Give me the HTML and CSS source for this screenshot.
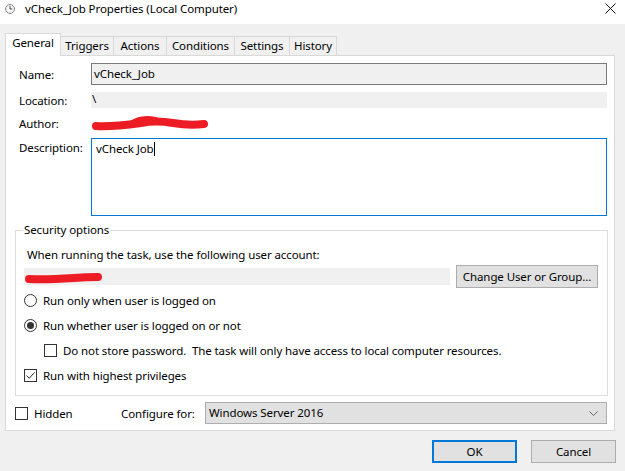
FILE: index.html
```html
<!DOCTYPE html>
<html lang="en">
<head>
	<meta charset="UTF-8">
	<title>vCheck_Job Properties</title>
	<link rel="stylesheet" href="styles.css">
</head>
<body>
	<div class="titlebar">
		<svg class="appIcon" viewBox="0 0 10 10">
			<circle cx="5" cy="5" r="4.5" fill="#fff" stroke="#8a8a8a" stroke-width="1"/>
			<circle cx="5" cy="5" r="3.6" fill="#fbfbfb" stroke="#c8c8c8" stroke-width="0.6"/>
			<path d="M5 2.2 V5 H7.2" fill="none" stroke="#333" stroke-width="0.9"/>
		</svg>
		<span class="title">vCheck_Job Properties (Local Computer)</span>
		<svg class="closeIcon" viewBox="0 0 11 11">
			<path d="M0.5 0.5 L10.5 10.5 M10.5 0.5 L0.5 10.5" stroke="#111" stroke-width="1"/>
		</svg>
	</div>

	<div class="tabs">
		<div class="tab active tabGeneral">General</div>
		<div class="tab tabTriggers">Triggers</div>
		<div class="tab tabActions">Actions</div>
		<div class="tab tabConditions">Conditions</div>
		<div class="tab tabSettings">Settings</div>
		<div class="tab tabHistory">History</div>
	</div>

	<div class="panel">
		<div class="fields">
			<div class="label">Name:</div>
			<div class="textBox">vCheck_Job</div>
			<div class="label">Location:</div>
			<div class="readOnly">\</div>
			<div class="label">Author:</div>
			<div class="author">
				<svg class="scribble" viewBox="0 0 118 16">
					<path d="M5 11 C 20 12, 35 10, 50 8 C 60 6, 70 6, 82 8 C 94 10, 104 10, 113 9" fill="none" stroke="#ed1c24" stroke-width="8" stroke-linecap="round"/>
					<path d="M40 9 C 46 4, 56 3, 64 5" fill="none" stroke="#ed1c24" stroke-width="6" stroke-linecap="round"/>
				</svg>
			</div>
			<div class="label labelTop">Description:</div>
			<div class="textArea">vCheck Job<span class="caret"></span></div>
		</div>

		<fieldset class="security">
			<legend>Security options</legend>
			<div class="hint">When running the task, use the following user account:</div>
			<div class="accountRow">
				<div class="account">
					<svg class="scribble" viewBox="0 0 80 17">
						<path d="M5 11 C 18 12, 35 11, 50 10 C 62 9, 70 9, 74 9" fill="none" stroke="#ed1c24" stroke-width="8" stroke-linecap="round"/>
					</svg>
				</div>
				<div class="btn changeBtn">Change User or Group...</div>
			</div>
			<div class="option"><span class="radio"></span>Run only when user is logged on</div>
			<div class="option"><span class="radio on"></span>Run whether user is logged on or not</div>
			<div class="option sub"><span class="check"></span>Do not store password.&nbsp; The task will only have access to local computer resources.</div>
			<div class="option">
				<span class="check">
					<svg viewBox="0 0 11 11"><path d="M1.5 5.5 L4.2 8.3 L9.6 2.4" fill="none" stroke="#222" stroke-width="1"/></svg>
				</span>Run with highest privileges
			</div>
		</fieldset>

		<div class="bottomRow">
			<div class="hidden"><span class="check"></span>Hidden</div>
			<div class="configLabel">Configure for:</div>
			<div class="select">
				Windows Server 2016
				<svg class="chevron" viewBox="0 0 9 5"><path d="M0.5 0.5 L4.5 4.5 L8.5 0.5" fill="none" stroke="#666" stroke-width="1"/></svg>
			</div>
		</div>
	</div>

	<div class="buttons">
		<div class="btn dialogBtn default">OK</div>
		<div class="btn dialogBtn">Cancel</div>
	</div>
</body>
</html>
```

FILE: styles.css
```css
* {
  box-sizing: border-box;
}
body {
  margin: 0;
  width: 625px;
  height: 471px;
  overflow: hidden;
  background: #f0f0f0;
  font-family: "Noto Sans", "Segoe UI", sans-serif;
  font-size: 11.5px;
  letter-spacing: -0.1px;
  color: #000;
}

/* title bar */
.titlebar {
  height: 24px;
  background: #fff;
  display: flex;
  align-items: flex-start;
  padding: 2px 9px 0 5px;
}
.titlebar .appIcon {
  width: 10px;
  height: 10px;
  margin-top: 2px;
}
.titlebar .title {
  flex: 1;
  margin-left: 10px;
  line-height: 14px;
}
.titlebar .closeIcon {
  width: 11px;
  height: 11px;
  margin-top: 1px;
}

/* tabs */
.tabs {
  display: flex;
  align-items: flex-end;
  height: 22px;
  margin: 9px 0 0 5px;
}
.tab {
  height: 19px;
  line-height: 18px;
  text-align: center;
  background: #f0f0f0;
  border: 1px solid #d9d9d9;
  border-left: none;
  border-bottom: none;
}
.tab.active {
  height: 23px;
  line-height: 18px;
  background: #fff;
  border-left: 1px solid #d9d9d9;
  margin-bottom: -1px;
  position: relative;
  z-index: 1;
}
.tabGeneral { width: 56px; }
.tabTriggers { width: 53px; }
.tabActions { width: 53px; }
.tabConditions { width: 68px; }
.tabSettings { width: 55px; }
.tabHistory { width: 47px; }

/* panel */
.panel {
  height: 376px;
  margin: 0 10px 0 5px;
  background: #fff;
  border: 1px solid #d9d9d9;
  padding: 7px 6px 0 9px;
}
.fields {
  display: grid;
  grid-template-columns: 72px 1fr;
  grid-template-rows: 22px 16px 16px 78px;
  row-gap: 7px;
  align-items: center;
  margin: 0 1px 0 4px;
}
.fields .labelTop {
  align-self: start;
  padding-top: 2px;
}
.textBox {
  height: 22px;
  line-height: 20px;
  padding: 0 2px;
  background: #f0f0f0;
  border: 1px solid #7a7a7a;
}
.readOnly {
  height: 16px;
  line-height: 14px;
  padding-left: 1px;
  background: #f0f0f0;
}
.author,
.account {
  height: 16px;
}
.scribble {
  display: block;
  height: 100%;
}
.author .scribble {
  width: 118px;
}
.textArea {
  height: 78px;
  padding: 3px 4px;
  line-height: 14px;
  border: 1px solid #0078d7;
}
.caret {
  display: inline-block;
  width: 1px;
  height: 14px;
  background: #000;
  vertical-align: top;
}

/* security options */
.security {
  margin: 6px 0 0 0;
  padding: 0 9px 7px 8px;
  border: 1px solid #dcdcdc;
  min-width: 0;
}
.security legend {
  padding: 0 1px;
  margin-left: -1px;
  line-height: 16px;
}
.hint {
  margin: 9px 0 0 3px;
  line-height: 16px;
}
.accountRow {
  display: flex;
  align-items: center;
  gap: 6px;
  margin-top: 2px;
}
.account {
  flex: 1;
  height: 17px;
  background: #f0f0f0;
}
.account .scribble {
  width: 80px;
}
.btn {
  background: #e1e1e1;
  border: 1px solid #adadad;
  text-align: center;
}
.changeBtn {
  width: 142px;
  height: 23px;
  line-height: 21px;
}
.option {
  display: flex;
  align-items: center;
  height: 25px;
}
.option.sub {
  padding-left: 20px;
}
.radio {
  width: 13px;
  height: 13px;
  margin-right: 6px;
  border: 1px solid #333;
  border-radius: 50%;
  display: flex;
  align-items: center;
  justify-content: center;
}
.radio.on::after {
  content: "";
  width: 7px;
  height: 7px;
  border-radius: 50%;
  background: #333;
}
.check {
  width: 13px;
  height: 13px;
  margin-right: 6px;
  border: 1px solid #333;
  background: #fff;
  flex: none;
}
.check svg {
  display: block;
  width: 11px;
  height: 11px;
}

/* bottom row */
.bottomRow {
  display: flex;
  align-items: center;
  height: 22px;
  margin: 6px 1px 0 0;
}
.hidden {
  display: flex;
  align-items: center;
  width: 106px;
}
.configLabel {
  width: 84px;
}
.select {
  flex: 1;
  height: 22px;
  line-height: 20px;
  padding: 0 8px 0 3px;
  background: #e1e1e1;
  border: 1px solid #adadad;
  display: flex;
  justify-content: space-between;
  align-items: center;
}
.select .chevron {
  width: 9px;
  height: 5px;
}

/* dialog buttons */
.buttons {
  display: flex;
  justify-content: flex-end;
  gap: 14px;
  margin: 9px 9px 0 0;
}
.dialogBtn {
  width: 85px;
  height: 23px;
  line-height: 21px;
}
.dialogBtn.default {
  border: 2px solid #0078d7;
  line-height: 19px;
}
```
